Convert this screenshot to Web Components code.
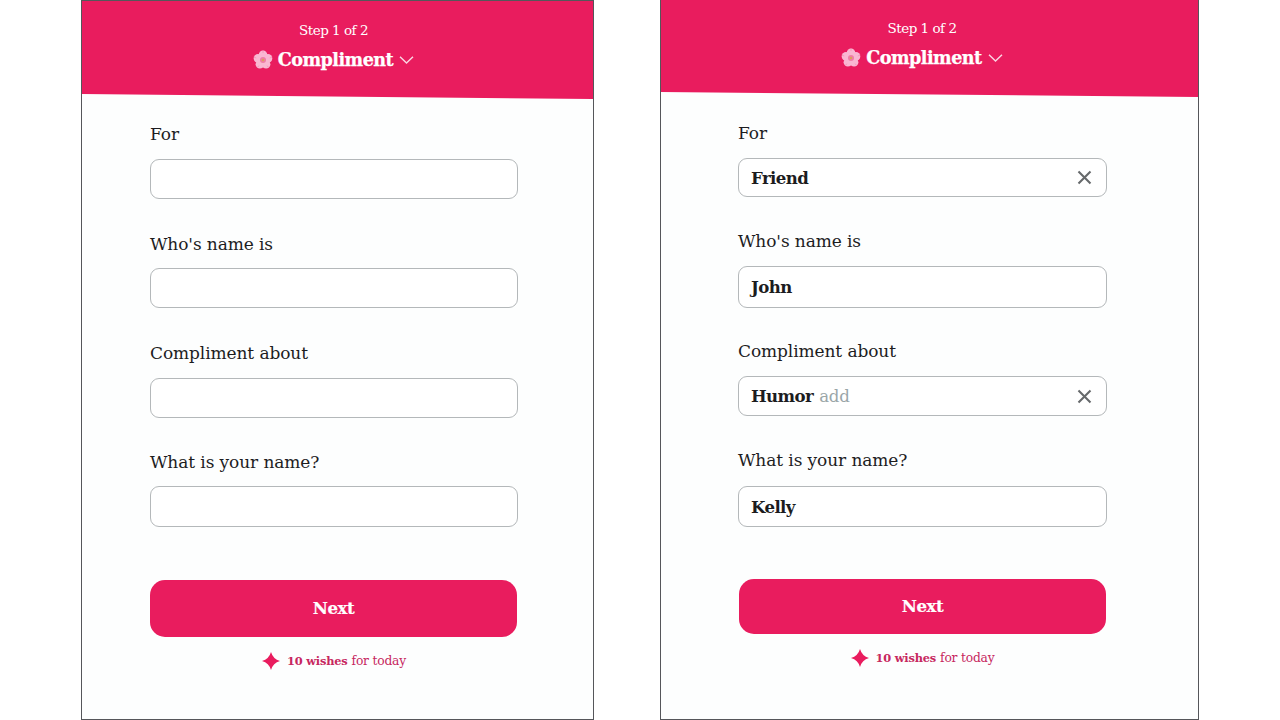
<!DOCTYPE html>
<html lang="en"><head><meta charset="utf-8"><title>Compliment</title>
<style>
html,body{margin:0;padding:0;background:#fff}
body{width:1280px;height:720px;overflow:hidden;display:flex;padding-left:81px;box-sizing:border-box;gap:66px;font-family:"DejaVu Serif","Liberation Serif",serif}
</style></head><body>
<template id="panel-t"><style>
:host{display:flex;flex-direction:column;box-sizing:border-box;height:720px;background:#fdfefe;border:1px solid #55565a;border-top-width:var(--bt,1px);overflow:hidden;color:#1d1d1f}
.form{display:flex;flex-direction:column;padding:var(--form-top) 0 0 var(--form-left);width:var(--form-w)}
</style><slot name="head"></slot><div class="form"><slot></slot></div></template>

<template id="head-t"><style>
:host{display:flex;flex-direction:column;align-items:center;box-sizing:border-box;height:var(--head-h);background:#e91c5e;color:#fff;clip-path:polygon(0 0,100% 0,100% 100%,0 calc(100% - 5px));padding:var(--head-top) var(--head-pr) 0 0}
.step{font:400 13.5px/20px "DejaVu Serif",serif;letter-spacing:-.5px}
.title{display:flex;align-items:center;height:24px;margin-top:8px;font:700 17.6px/24px "DejaVu Serif",serif;letter-spacing:-.55px;-webkit-text-stroke:.25px #fff}
.fl{width:20px;height:20px;margin-right:5px;flex:none}
.ch{width:15px;height:10px;margin-left:6px;flex:none}
</style><div class="step">Step 1 of 2</div><div class="title">
<svg class="fl" viewBox="0 0 20 20"><g fill="#f9b7d2"><circle cx="10" cy="4.8" r="4.3"/><circle cx="15" cy="8.4" r="4.3"/><circle cx="13.1" cy="14.3" r="4.3"/><circle cx="6.9" cy="14.3" r="4.3"/><circle cx="5" cy="8.4" r="4.3"/></g><g stroke="#f48fb5" stroke-width=".8" stroke-linecap="round"><path d="M10 .8V2.6M18.9 7.2 17.2 7.8M15.5 17.5 14.4 16M4.5 17.5 5.6 16M1.1 7.2 2.8 7.8"/></g><circle cx="10" cy="10" r="3" fill="#f07ea6"/><circle cx="10" cy="10" r="1.2" fill="#dba35a"/></svg>
<span>Compliment</span>
<svg class="ch" viewBox="0 0 15 10"><path d="M1 1.8 7.5 8 14 1.8" fill="none" stroke="#fbd3e1" stroke-width="1.5"/></svg></div></template>

<template id="field-t"><style>
:host{display:flex;flex-direction:column;margin-bottom:var(--after,34px)}
.l{font:400 17px/24px "DejaVu Serif",serif;letter-spacing:-.1px;color:#1d1d1f;margin-bottom:var(--gap,13px)}
.b{display:flex;align-items:center;box-sizing:border-box;height:var(--h,40px);border:1px solid #b4b8ba;border-radius:9px;background:#fff;padding:0 14px 0 12px;font:700 16.6px/24px "DejaVu Serif",serif;letter-spacing:-.6px;color:#1c1c1e}
.v{display:inline-flex;align-items:baseline}
.a{font-weight:400;color:#9aa6a8;margin-left:6px;letter-spacing:-.2px}
svg{margin-left:auto;width:15px;height:15px;flex:none}
</style><div class="l"><slot name="label"></slot></div><div class="b"><span class="v"><slot></slot><span class="a" id="a"></span></span><svg id="x" viewBox="0 0 15 15"><path d="M1.5 1.5 13.5 13.5M13.5 1.5 1.5 13.5" stroke="#66696b" stroke-width="2.1" fill="none"/></svg></div></template>

<template id="cta-t"><style>
:host{display:flex;align-items:center;justify-content:center;box-sizing:border-box;height:var(--h,56px);padding-bottom:2px;border-radius:15px;background:#e91c5e;color:#fff;font:700 16.6px/24px "DejaVu Serif",serif;letter-spacing:-.5px;-webkit-text-stroke:.2px #fff}
</style><slot></slot></template>

<template id="wish-t"><style>
:host{display:flex;align-items:center;justify-content:center;height:24px;color:#c7285f}
svg{width:18px;height:18px;margin-right:7px;flex:none}
b{font:700 11.4px/24px "DejaVu Serif",serif;letter-spacing:-.2px;margin-right:4px}
span{font:400 12.3px/24px "DejaVu Serif",serif;letter-spacing:-.2px}
</style><svg viewBox="0 0 18 18"><path d="M9 0Q11 7 18 9Q11 11 9 18Q7 11 0 9Q7 7 9 0Z" fill="#e91c5e"/></svg><b>10 wishes</b><span>for today</span></template>

<form-panel style="width:513px;--form-top:23px;--form-left:68px;--form-w:368px">
  <step-head slot="head" style="--head-h:98px;--head-top:19px;--head-pr:8px"></step-head>
  <form-field style="--h:40px;--gap:13px;--after:33px"><span slot="label">For</span></form-field>
  <form-field style="--h:40px;--gap:12px;--after:33px"><span slot="label">Who's name is</span></form-field>
  <form-field style="--h:40px;--gap:13px;--after:32px"><span slot="label">Compliment about</span></form-field>
  <form-field style="--h:41px;--gap:12px;--after:53px"><span slot="label">What is your name?</span></form-field>
  <next-button style="--h:57px;margin-right:1px">Next</next-button>
  <wish-note style="margin-top:12px"></wish-note>
</form-panel>
<form-panel style="width:539px;--bt:0px;--form-top:24px;--form-left:77px;--form-w:369px">
  <step-head slot="head" style="--head-h:97px;--head-top:18px;--head-pr:15px"></step-head>
  <form-field clear style="--h:39px;--gap:13px;--after:32px"><span slot="label">For</span>Friend</form-field>
  <form-field style="--h:42px;--gap:13px;--after:31px"><span slot="label">Who's name is</span>John</form-field>
  <form-field clear add="add" style="--h:40px;--gap:13px;--after:32px"><span slot="label">Compliment about</span>Humor</form-field>
  <form-field style="--h:41px;--gap:14px;--after:52px"><span slot="label">What is your name?</span>Kelly</form-field>
  <next-button style="--h:55px;margin:0 1px">Next</next-button>
  <wish-note style="margin-top:12px"></wish-note>
</form-panel>
<script>
function def(name,tid,init){customElements.define(name,class extends HTMLElement{constructor(){super();const s=this.attachShadow({mode:'open'});s.appendChild(document.getElementById(tid).content.cloneNode(true));}connectedCallback(){init&&init.call(this,this.shadowRoot)}})}
def('form-panel','panel-t');
def('step-head','head-t');
def('form-field','field-t',function(s){if(!this.hasAttribute('clear'))s.getElementById('x').remove();const a=this.getAttribute('add');const e=s.getElementById('a');if(a)e.textContent=a;else e.remove();});
def('next-button','cta-t');
def('wish-note','wish-t');
</script>
</body></html>
